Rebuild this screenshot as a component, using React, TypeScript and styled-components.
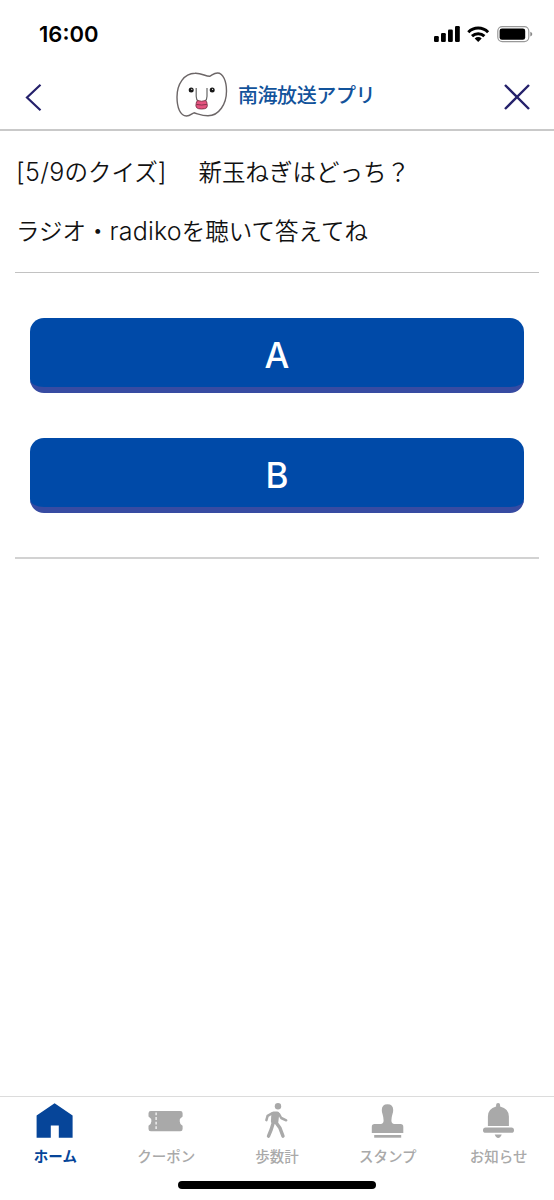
import React from 'react';
import styled, { createGlobalStyle } from 'styled-components';

const GlobalStyle = createGlobalStyle`
  * { box-sizing: border-box; }
  body { margin: 0; background: #fff; font-family: Inter, "Noto Sans CJK JP", sans-serif; color: #111; }
`;

const Screen = styled.div`
  width: 554px;
  height: 1200px;
  display: flex;
  flex-direction: column;
  background: #fff;
  overflow: hidden;
`;

const StatusBar = styled.div`
  height: 66px;
  flex: none;
  display: flex;
  justify-content: space-between;
  align-items: flex-start;
  padding: 21px 20px 0 39px;
`;

const Clock = styled.div`
  font-size: 22px;
  line-height: 27px;
  font-weight: 600;
  color: #000;
`;

const Header = styled.header`
  height: 65px;
  flex: none;
  display: flex;
  align-items: flex-start;
  justify-content: space-between;
  padding: 0 22px;
  border-bottom: 2px solid #c9c9c9;
`;

const IconButton = styled.button`
  border: 0;
  padding: 0;
  margin-top: 16px;
  background: none;
  display: flex;
`;

const Brand = styled.div`
  display: flex;
  margin-right: 1px;
  gap: 8px;
`;

const BrandName = styled.span`
  font-family: "Noto Sans CJK JP", sans-serif;
  font-weight: 500;
  font-size: 20px;
  line-height: 30px;
  margin-top: 14px;
  letter-spacing: -0.4px;
  color: #12539b;
  white-space: nowrap;
`;

const Main = styled.main`
  flex: 1;
  padding: 25px 15px 0;
`;

const Line = styled.p`
  margin: 0 0 29px 1px;
  height: 30px;
  line-height: 30px;
  display: flex;
  align-items: baseline;
  font-size: 23.5px;
  font-weight: 350;
  white-space: pre;
`;

const Latin = styled.span<{ $spacing: number }>`
  font-size: 25px;
  letter-spacing: ${(p) => p.$spacing}px;
`;

const Phrase = styled.span<{ $indent?: number }>`
  font-family: "Noto Sans CJK JP", sans-serif;
  margin-left: ${(p) => p.$indent ?? 0}px;
`;

const Choices = styled.div`
  margin-top: -2px;
  padding: 45px 15px 44px;
  display: flex;
  flex-direction: column;
  gap: 45px;
  border-top: 1px solid #c2c2c2;
  border-bottom: 2px solid #d2d2d2;
`;

const Choice = styled.button`
  height: 75px;
  border: 0;
  border-bottom: 6px solid #374ba2;
  border-radius: 14px;
  background: #004aa8;
  color: #fff;
  font: 500 35px/69px Inter, sans-serif;
  padding: 3px 0 0;
`;

const TabBar = styled.nav`
  height: 104px;
  flex: none;
  border-top: 1px solid #dcdcdc;
  position: relative;
  display: grid;
  grid-template-columns: repeat(5, 1fr);
`;

const Tab = styled.a<{ $active?: boolean }>`
  display: flex;
  flex-direction: column;
  align-items: center;
  padding-top: 6px;
  color: ${(p) => (p.$active ? '#064599' : '#a9a9a9')};
  font: ${(p) => (p.$active ? 700 : 500)} 14.5px/22px "Noto Sans CJK JP", sans-serif;
`;

const TabLabel = styled.span`
  margin-top: 6px;
`;

const HomeIndicator = styled.div`
  position: absolute;
  left: 178px;
  top: 83.5px;
  width: 198px;
  height: 8px;
  border-radius: 4px;
  background: #000;
`;

const StatusIcons = () => (
  <svg width="100" height="28" viewBox="434 21 100 28">
    <rect x="434" y="36" width="4.8" height="6" rx="1.2" />
    <rect x="441" y="33" width="4.8" height="9" rx="1.2" />
    <rect x="448" y="29.5" width="4.8" height="12.5" rx="1.2" />
    <rect x="455" y="26" width="4.8" height="16" rx="1.2" />
    <g fill="none" stroke="#000" strokeWidth="3">
      <path d="M468.3 32.2a14 14 0 0 1 19.8 0" />
      <path d="M472 36.2a9 9 0 0 1 12.4 0" />
    </g>
    <path d="M474.7 38.4a5 5 0 0 1 7 0L478.2 42z" />
    <rect x="497.8" y="26.6" width="31" height="15" rx="4.5" fill="none" stroke="#999" strokeWidth="1.2" />
    <rect x="499.6" y="28.4" width="25.6" height="11.4" rx="2.4" />
    <path d="M530.3 31.8q2 .7 2 2.3t-2 2.3z" fill="#888" />
  </svg>
);

const Mascot = () => (
  <svg width="56" height="54" viewBox="174 66 56 54">
    <path
      d="M210 76.200C213 74.500 214 73 217.500 73C223 73 226.500 81 226.500 91C226.500 104 219 115.800 208 115.800C202 115.800 198.500 114 194 112.800C191.500 113.500 190.500 116 186.500 116C180 116 177 107 177 97C177 84 184 73.500 195 73.300C202 73 205.500 76.500 210 76.200Z"
      fill="#fff" stroke="#6c6667" strokeWidth="1.4"
    />
    <circle cx="191.200" cy="90" r="2.500" fill="#171717" />
    <circle cx="212.200" cy="90" r="2.500" fill="#171717" />
    <circle cx="191.800" cy="89.300" r=".6" fill="#fff" />
    <circle cx="212.600" cy="89.300" r=".6" fill="#fff" />
    <path d="M196.200 88v8.200q0 3.500 2.100 5.300M207 88v8.200q0 3.500-2.100 5.300" fill="none" stroke="#666" strokeWidth="1.200" />
    <path d="M198 100.600q3.600 1.400 7.200 0 2 .8 1.800 2.800l.3 2.500q-.2 2.500-2.700 2.800-3 .6-6 0-2.500-.5-2.700-2.800l.3-2.500q-.2-2 1.800-2.800Z" fill="#e5527f" stroke="#7d3045" strokeWidth=".9" />
    <path d="M196.300 104.400q5.300 1.300 10.600 0" fill="none" stroke="#7d3045" strokeWidth=".9" />
  </svg>
);

const HomeIcon = () => (
  <svg width="40" height="36" viewBox="35.400 1103 40 36" fill="currentColor">
    <path d="M55 1103.300 73 1115.500v22.300H59.200v-12.200h-8v12.200H37v-22.300Z" />
  </svg>
);

const CouponIcon = () => (
  <svg width="40" height="36" viewBox="146.200 1103 40 36" fill="currentColor">
    <path d="M151 1111h29.500q2.300 0 2.300 2.300v3.300q-2.900 1.700-2.900 4.600t2.900 4.600v3.100q0 2.300-2.300 2.300H151q-2.300 0-2.300-2.300v-3.100q2.900-1.700 2.900-4.600t-2.900-4.600v-3.300q0-2.300 2.300-2.300Z" />
    <path d="M156.300 1112.500v18" stroke="#fff" strokeWidth="1.200" strokeDasharray="2.800 1.800" />
  </svg>
);

const WalkIcon = () => (
  <svg width="40" height="36" viewBox="257 1103 40 36" fill="none" stroke="currentColor" strokeLinecap="round" strokeLinejoin="round">
    <circle cx="278" cy="1106.200" r="3.200" fill="currentColor" stroke="none" />
    <path d="M273.500 1113.500h3.700l-1 8.500-3.200-.5Z" fill="currentColor" strokeWidth="4.200" />
    <path d="M272.500 1113.200l-4.900 2.700-1.200 4.200M279 1114l2.200 4 5 2.300" strokeWidth="2.500" />
    <path d="M273.200 1123l-2 6.500-2.700 6.700M276 1122.500l3.800 5.200 3.200 8.500" strokeWidth="3.400" />
  </svg>
);

const StampIcon = () => (
  <svg width="40" height="36" viewBox="367.800 1103 40 36" fill="currentColor">
    <path d="M382.300 1114q-.7-2-.7-4.100 0-5.700 5.700-5.700t5.700 5.700q0 2.100-.7 4.100-1.100 3.300-1.100 6.600 0 3.400 3 3.400h6.200q2.700 0 2.700 2.700v6.300h-31.500v-6.300q0-2.700 2.700-2.700h6.100q3 0 3-3.400 0-3.300-1.100-6.600Z" />
    <path d="M374 1135h27v2.700h-27z" />
  </svg>
);

const BellIcon = () => (
  <svg width="40" height="36" viewBox="478.600 1103 40 36" fill="currentColor">
    <path d="M487.500 1126v-9.500q0-7.800 8.200-10v-1.400q0-2 2-2t2 2v1.400q8.800 2.200 8.800 10v9.500Z" />
    <rect x="482.600" y="1127.500" width="31" height="5.300" rx="2.650" />
    <path d="M494.300 1134.500h7q-1.200 3.400-3.500 3.400t-3.500-3.400Z" />
  </svg>
);

export default function App() {
  return (
    <>
      <GlobalStyle />
      <Screen>
        <StatusBar>
          <Clock>16:00</Clock>
          <StatusIcons />
        </StatusBar>
        <Header>
          <IconButton aria-label="戻る">
            <svg width="24" height="30" viewBox="22 82 24 30" fill="none" stroke="#25216b" strokeWidth="2.200">
              <path d="M40.500 84.700 27 97.500l13.500 12.800" />
            </svg>
          </IconButton>
          <Brand>
            <Mascot />
            <BrandName>南海放送アプリ</BrandName>
          </Brand>
          <IconButton aria-label="閉じる">
            <svg width="28" height="30" viewBox="504 82 28 30" fill="none" stroke="#25216b" strokeWidth="2.400">
              <path d="m505 85 24 24m0-24-24 24" />
            </svg>
          </IconButton>
        </Header>
        <Main>
          <Line>
            <Latin $spacing={0.3}>[5/9</Latin>
            <Phrase>のクイズ</Phrase>
            <Latin $spacing={0}>]</Latin>
            <Phrase $indent={32}>新玉ねぎはどっち？</Phrase>
          </Line>
          <Line>
            <Phrase>ラジオ・</Phrase>
            <Latin $spacing={0.2}>radiko</Latin>
            <Phrase>を聴いて答えてね</Phrase>
          </Line>
          <Choices>
            <Choice>A</Choice>
            <Choice>B</Choice>
          </Choices>
        </Main>
        <TabBar>
          <Tab $active><HomeIcon /><TabLabel>ホーム</TabLabel></Tab>
          <Tab><CouponIcon /><TabLabel>クーポン</TabLabel></Tab>
          <Tab><WalkIcon /><TabLabel>歩数計</TabLabel></Tab>
          <Tab><StampIcon /><TabLabel>スタンプ</TabLabel></Tab>
          <Tab><BellIcon /><TabLabel>お知らせ</TabLabel></Tab>
          <HomeIndicator />
        </TabBar>
      </Screen>
    </>
  );
}
